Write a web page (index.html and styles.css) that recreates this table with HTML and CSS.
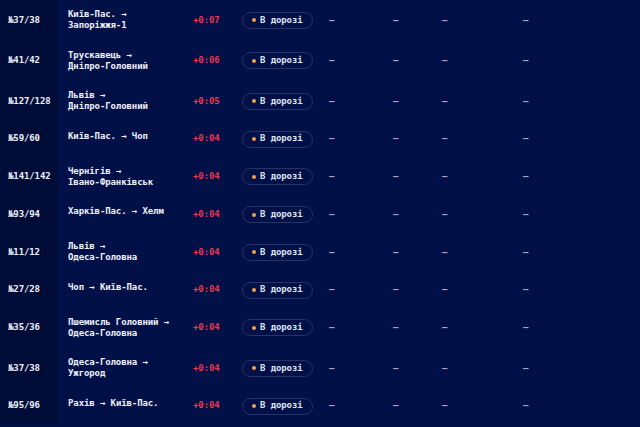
FILE: index.html
```html
<!DOCTYPE html>
<html lang="uk">
<head>
<meta charset="utf-8">
<title>Поїзди</title>
<link rel="stylesheet" href="styles.css">
</head>
<body>
<table class="trains">
  <colgroup>
    <col class="c-num"><col class="c-route"><col class="c-delay"><col class="c-status">
    <col class="c-a"><col class="c-b"><col class="c-c"><col class="c-d">
  </colgroup>
  <tbody>
    <tr><td class="num">№37/38</td><td class="route"><span class="st">Київ-Пас.</span> → <span class="st">Запоріжжя-1</span></td><td class="delay">+0:07</td><td><span class="badge"><i class="dot"></i>В дорозі</span></td><td class="dash">—</td><td class="dash">—</td><td class="dash">—</td><td class="dash">—</td></tr>
    <tr><td class="num">№41/42</td><td class="route"><span class="st">Трускавець</span> → <span class="st">Дніпро-Головний</span></td><td class="delay">+0:06</td><td><span class="badge"><i class="dot"></i>В дорозі</span></td><td class="dash">—</td><td class="dash">—</td><td class="dash">—</td><td class="dash">—</td></tr>
    <tr><td class="num">№127/128</td><td class="route"><span class="st">Львів</span> → <span class="st">Дніпро-Головний</span></td><td class="delay">+0:05</td><td><span class="badge"><i class="dot"></i>В дорозі</span></td><td class="dash">—</td><td class="dash">—</td><td class="dash">—</td><td class="dash">—</td></tr>
    <tr><td class="num">№59/60</td><td class="route"><span class="st">Київ-Пас.</span> → <span class="st">Чоп</span></td><td class="delay">+0:04</td><td><span class="badge"><i class="dot"></i>В дорозі</span></td><td class="dash">—</td><td class="dash">—</td><td class="dash">—</td><td class="dash">—</td></tr>
    <tr><td class="num">№141/142</td><td class="route"><span class="st">Чернігів</span> → <span class="st">Івано-Франківськ</span></td><td class="delay">+0:04</td><td><span class="badge"><i class="dot"></i>В дорозі</span></td><td class="dash">—</td><td class="dash">—</td><td class="dash">—</td><td class="dash">—</td></tr>
    <tr><td class="num">№93/94</td><td class="route"><span class="st">Харків-Пас.</span> → <span class="st">Хелм</span></td><td class="delay">+0:04</td><td><span class="badge"><i class="dot"></i>В дорозі</span></td><td class="dash">—</td><td class="dash">—</td><td class="dash">—</td><td class="dash">—</td></tr>
    <tr><td class="num">№11/12</td><td class="route"><span class="st">Львів</span> → <span class="st">Одеса-Головна</span></td><td class="delay">+0:04</td><td><span class="badge"><i class="dot"></i>В дорозі</span></td><td class="dash">—</td><td class="dash">—</td><td class="dash">—</td><td class="dash">—</td></tr>
    <tr><td class="num">№27/28</td><td class="route"><span class="st">Чоп</span> → <span class="st">Київ-Пас.</span></td><td class="delay">+0:04</td><td><span class="badge"><i class="dot"></i>В дорозі</span></td><td class="dash">—</td><td class="dash">—</td><td class="dash">—</td><td class="dash">—</td></tr>
    <tr><td class="num">№35/36</td><td class="route"><span class="st">Пшемисль Головний</span> → <span class="st">Одеса-Головна</span></td><td class="delay">+0:04</td><td><span class="badge"><i class="dot"></i>В дорозі</span></td><td class="dash">—</td><td class="dash">—</td><td class="dash">—</td><td class="dash">—</td></tr>
    <tr><td class="num">№37/38</td><td class="route"><span class="st">Одеса-Головна</span> → <span class="st">Ужгород</span></td><td class="delay">+0:04</td><td><span class="badge"><i class="dot"></i>В дорозі</span></td><td class="dash">—</td><td class="dash">—</td><td class="dash">—</td><td class="dash">—</td></tr>
    <tr><td class="num">№95/96</td><td class="route"><span class="st">Рахів</span> → <span class="st">Київ-Пас.</span></td><td class="delay">+0:04</td><td><span class="badge"><i class="dot"></i>В дорозі</span></td><td class="dash">—</td><td class="dash">—</td><td class="dash">—</td><td class="dash">—</td></tr>
  </tbody>
</table>
</body>
</html>
```

FILE: styles.css
```css
html, body {
  margin: 0;
  padding: 0;
  height: 100%;
  background: #011046;
  overflow: hidden;
}

body {
  font-family: "DejaVu Sans Mono", "Liberation Mono", monospace;
  font-size: 9px;
  font-weight: bold;
  letter-spacing: -0.1px;
  color: #eef0f8;
}

.trains {
  width: 100%;
  table-layout: fixed;
  border-collapse: collapse;
}

.c-num { width: 58px; }
.c-route { width: 125px; }
.c-delay { width: 49px; }
.c-status { width: 87px; }
.c-a { width: 64px; }
.c-b { width: 49px; }
.c-c { width: 81px; }

.trains td {
  padding: 9px 0 9px 10px;
  vertical-align: middle;
  line-height: 11.25px;
  white-space: nowrap;
}

.trains td.num {
  padding-left: 8px;
  background: #000c38;
}

.trains td.route {
  vertical-align: top;
  white-space: normal;
  padding-right: 10px;
}

.st { white-space: nowrap; }

.delay { color: #e8384f; }

.dash {
  color: #a3a8c8;
}

.badge {
  display: inline-flex;
  align-items: center;
  gap: 4px;
  height: 17px;
  box-sizing: border-box;
  padding: 0 9px 0 9px;
  border: 1px solid #263465;
  border-radius: 9px;
  color: #dfe3f1;
  vertical-align: middle;
}

.dot {
  width: 4px;
  height: 4px;
  border-radius: 50%;
  background: #f1a14a;
}
```
